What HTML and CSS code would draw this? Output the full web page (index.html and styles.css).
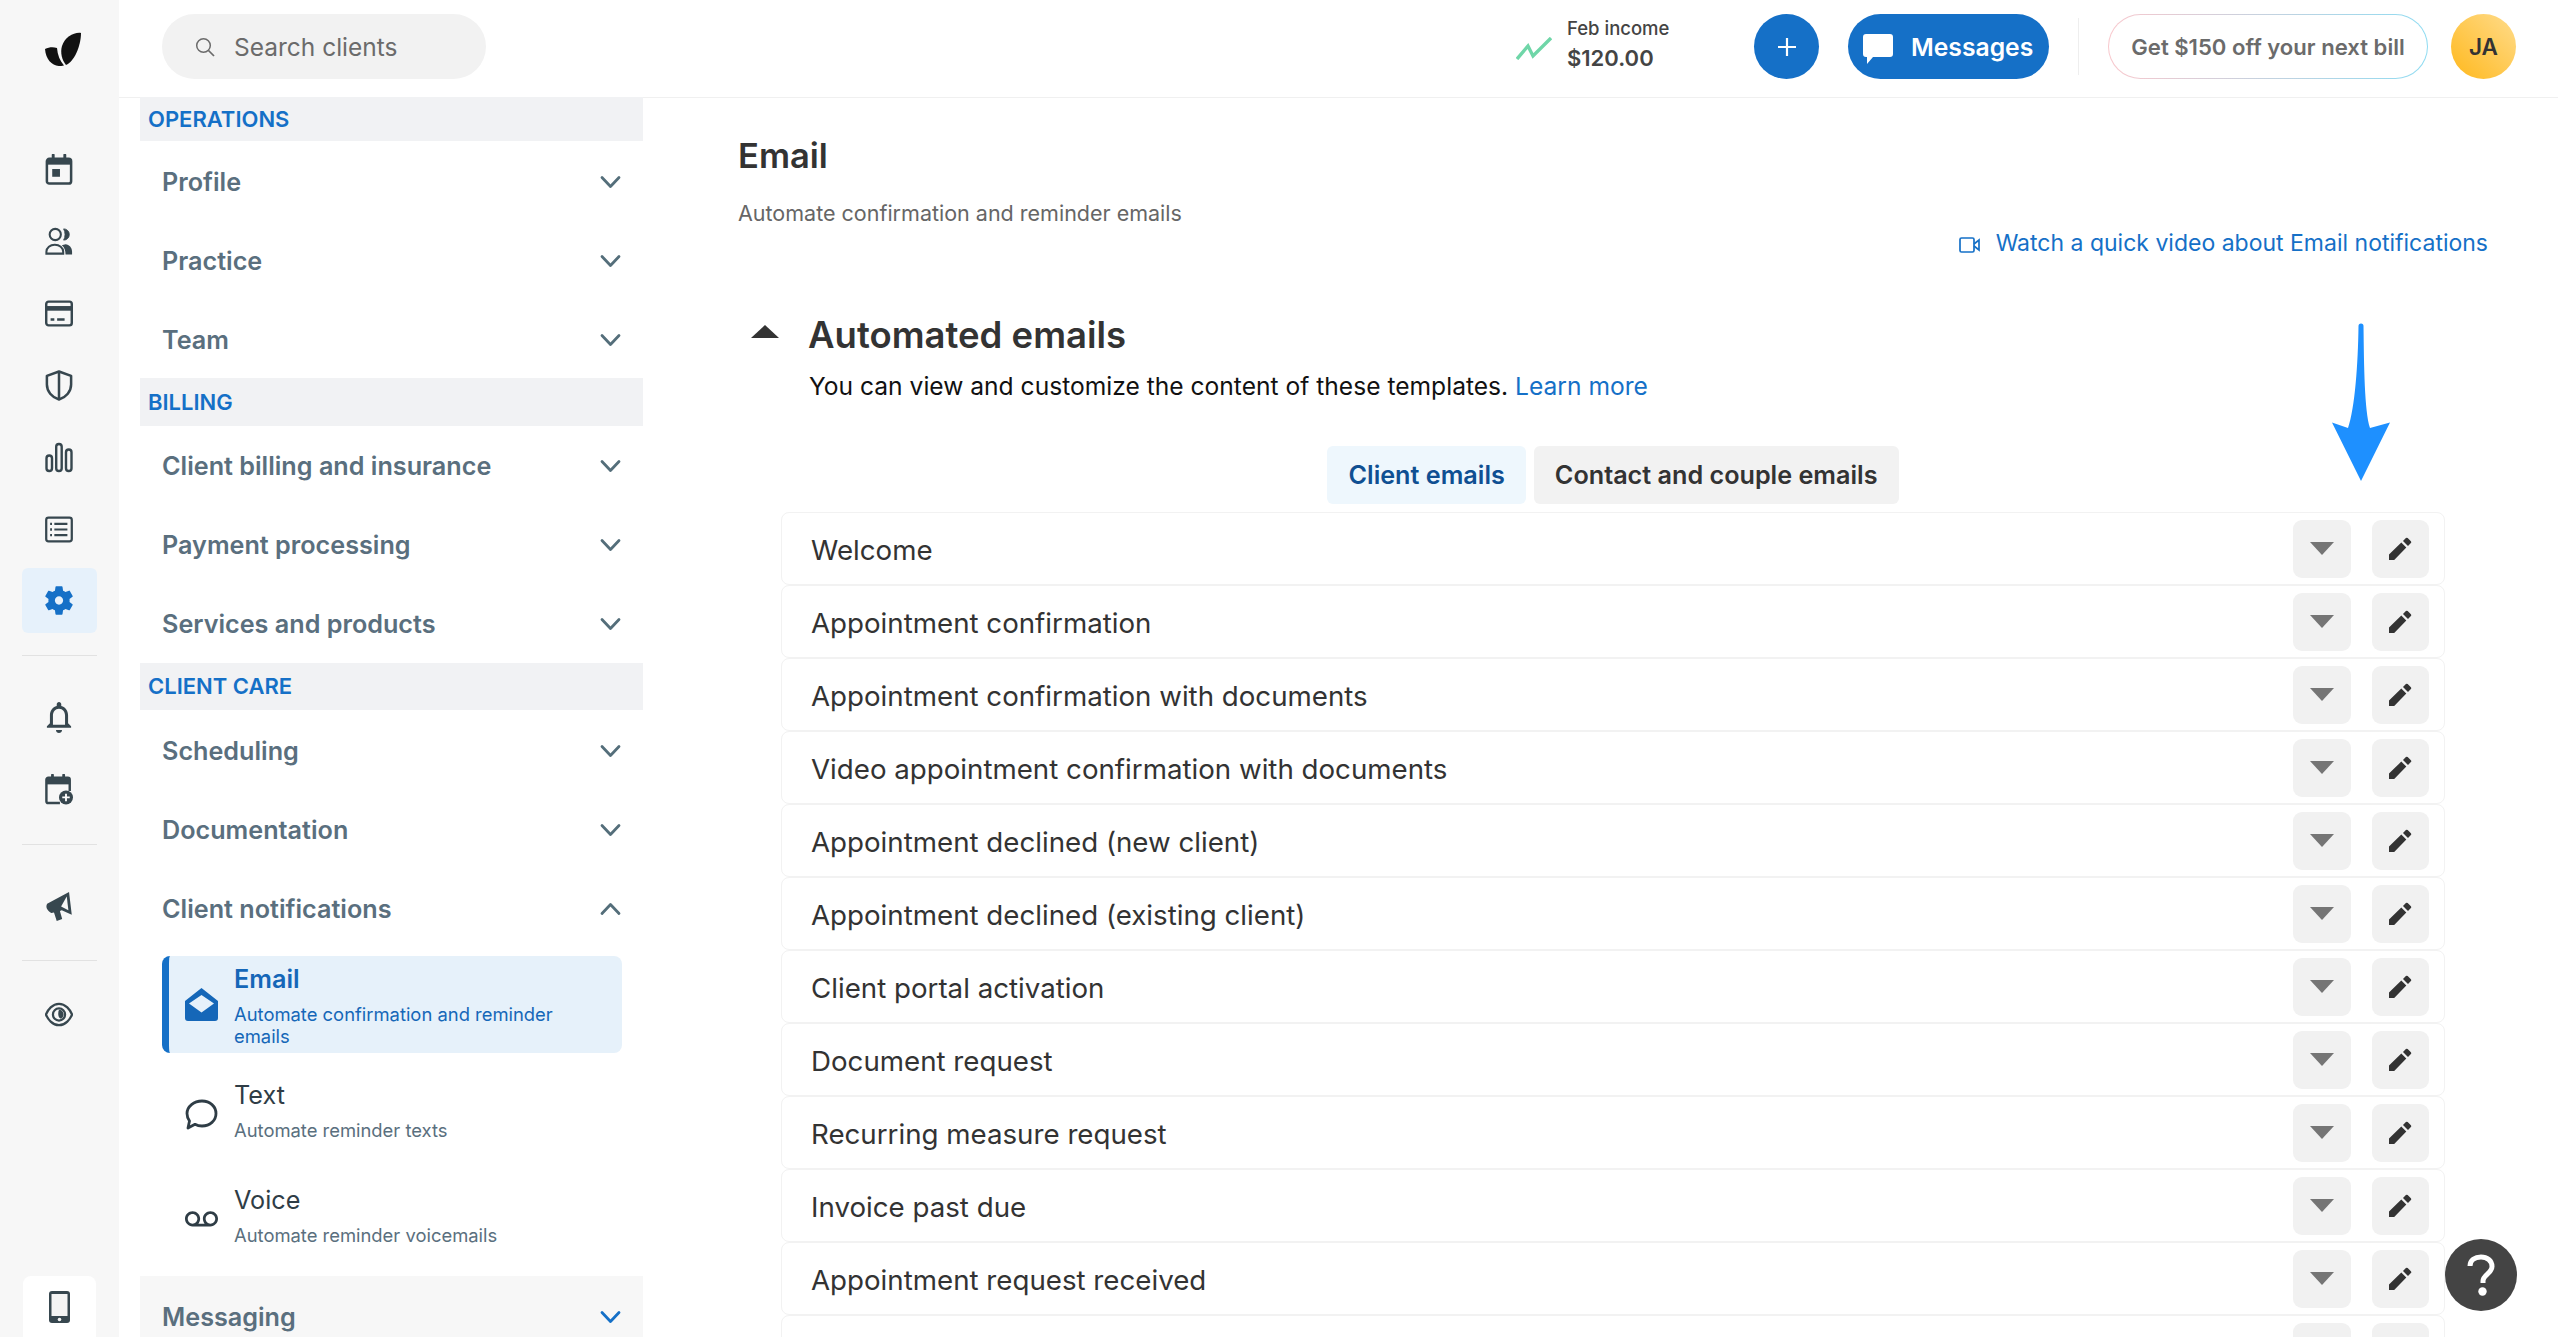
FILE: index.html
```html
<!DOCTYPE html>
<html lang="en">
<head>
<meta charset="utf-8">
<title>Email notifications</title>
<link rel="stylesheet" href="styles.css">
</head>
<body>
<svg class="defs" aria-hidden="true">
  <symbol id="chev" viewBox="0 0 21 14"><path d="M2 2.500l8.500 9 8.500-9" fill="none" stroke="currentColor" stroke-width="2.800" stroke-linecap="round" stroke-linejoin="round"/></symbol>
  <symbol id="pencil" viewBox="0 0 25 25"><path d="M1 18.600v5.400h5.200L18.300 11.600l-5-5zM15 5l2.900-2.900a1.300 1.300 0 0 1 1.800 0l3.200 3.200a1.300 1.300 0 0 1 0 1.800L20 10z" fill="#333"/></symbol>
</svg>
<div class="app">
  <nav class="rail">
    <div class="logo">
      <svg class="logo-svg" viewBox="0 0 36 34"><path d="M36 1C29 0 20 5 17 14 15 21 17 28 21 33 29 30 36 14 36 1Z" fill="#111"/><path d="M0 17c4-2 8-2.500 12-1 .5 7 3 13 7 17.500C10 36 1 30 0 17Z" fill="#111"/></svg>
    </div>
    <div class="rail-top">
      <a class="slot"><svg class="ri" viewBox="0 0 28 32"><path d="M8 1v4M20 1v4" stroke="#37474f" stroke-width="3" stroke-linecap="round"/><rect x="1.500" y="5" width="25" height="25.500" rx="2.500" fill="none" stroke="#37474f" stroke-width="2.600"/><rect x="2" y="5" width="24" height="6" fill="#37474f"/><rect x="7" y="15.500" width="8" height="8" fill="#37474f"/></svg></a>
      <a class="slot"><svg class="ri" viewBox="0 0 30 30"><circle cx="11" cy="7.500" r="6" fill="none" stroke="#37474f" stroke-width="2.200"/><path d="M20 1.500a6 6 0 0 1 0 12c2-3 2-9 0-12z" fill="#37474f" stroke="#37474f"/><path d="M1.500 28v-2c0-4.500 4-7.500 9-7.500s9 3 9 7.500v2z" fill="none" stroke="#37474f" stroke-width="2.200"/><path d="M22 18c4 .5 7 3.500 7 8v3h-7c0-4-1-8-4-10z" fill="#37474f"/></svg></a>
      <a class="slot"><svg class="ri" viewBox="0 0 30 30"><rect x="1.300" y="2.300" width="27.400" height="25.400" rx="2.500" fill="none" stroke="#37474f" stroke-width="2.600"/><rect x="2" y="7" width="26" height="5" fill="#37474f"/><path d="M6 21.500h4M13 21.500h8" stroke="#37474f" stroke-width="2.800"/></svg></a>
      <a class="slot"><svg class="ri" viewBox="0 0 28 32"><path d="M14 1.500L26.500 6v9c0 7-5 13-12.500 15.500C6.500 28 1.500 22 1.500 15V6z" fill="none" stroke="#37474f" stroke-width="2.600" stroke-linejoin="round"/><path d="M14 2v28" stroke="#37474f" stroke-width="2.600"/></svg></a>
      <a class="slot"><svg class="ri" viewBox="0 0 28 30"><rect x="1.500" y="13" width="5.500" height="15.500" rx="2.700" fill="none" stroke="#37474f" stroke-width="2.400"/><rect x="11.200" y="1.500" width="5.500" height="27" rx="2.700" fill="none" stroke="#37474f" stroke-width="2.400"/><rect x="21" y="7" width="5.500" height="21.500" rx="2.700" fill="none" stroke="#37474f" stroke-width="2.400"/></svg></a>
      <a class="slot"><svg class="ri" viewBox="0 0 30 30"><rect x="1.300" y="2.300" width="27.400" height="25.400" rx="2.500" fill="none" stroke="#37474f" stroke-width="2.400"/><path d="M10 9h14M10 15h14M10 21h14" stroke="#37474f" stroke-width="2.400"/><path d="M5.500 9h2M5.500 15h2M5.500 21h2" stroke="#37474f" stroke-width="2.600"/></svg></a>
    </div>
    <a class="gear"><svg class="ri" viewBox="2.500 1.500 19 21"><path d="M19.140 12.940c.04-.3.06-.61.06-.94 0-.32-.02-.64-.07-.94l2.030-1.580a.49.49 0 0 0 .12-.61l-1.920-3.320a.488.488 0 0 0-.59-.22l-2.390.96c-.5-.38-1.030-.7-1.620-.94l-.36-2.540a.484.484 0 0 0-.48-.41h-3.840c-.24 0-.43.17-.47.41l-.36 2.540c-.59.24-1.130.57-1.620.94l-2.390-.96c-.22-.08-.47 0-.59.22L2.740 8.870c-.12.21-.08.47.12.61l2.030 1.580c-.05.3-.09.63-.09.94s.02.64.07.94l-2.030 1.580a.49.49 0 0 0-.12.61l1.920 3.320c.12.22.37.29.59.22l2.390-.96c.5.38 1.030.7 1.620.94l.36 2.540c.05.24.24.41.48.41h3.840c.24 0 .44-.17.47-.41l.36-2.540c.59-.24 1.130-.56 1.620-.94l2.390.96c.22.08.47 0 .59-.22l1.920-3.320c.12-.22.07-.47-.12-.61l-2.010-1.580zM12 14.800c-1.500 0-2.800-1.300-2.800-2.800s1.300-2.800 2.800-2.800 2.800 1.300 2.800 2.800-1.300 2.800-2.800 2.800z" fill="#1570c7"/></svg></a>
    <hr class="rail-div d1">
    <a class="slot s-bell"><svg class="ri" viewBox="3.500 2 17 20.500"><path d="M12 22.500c1.100 0 2-.9 2-2h-4c0 1.100.9 2 2 2zm6-6.500v-5c0-3.070-1.630-5.640-4.500-6.320V3.500c0-.83-.67-1.500-1.500-1.500s-1.500.67-1.500 1.500v1.180C7.640 5.360 6 7.920 6 11v5l-2 2v1h16v-1l-2-2zm-2 1H8v-6c0-2.480 1.510-4.500 4-4.500s4 2.020 4 4.500v6z" fill="#37474f"/></svg></a>
    <a class="slot"><svg class="ri" viewBox="0 0 30 33"><path d="M8 1v4M20 1v4" stroke="#37474f" stroke-width="3" stroke-linecap="round"/><path d="M16 31H3.500a2 2 0 0 1-2-2V6a2 2 0 0 1 2-2h21a2 2 0 0 1 2 2v12" fill="none" stroke="#37474f" stroke-width="2.600"/><rect x="2" y="4" width="24" height="7" fill="#37474f"/><circle cx="22.500" cy="25" r="7.500" fill="#37474f"/><path d="M22.500 21v8M18.500 25h8" stroke="#fff" stroke-width="2"/></svg></a>
    <hr class="rail-div d2">
    <a class="slot s-mega"><svg class="ri" viewBox="0 0 30 34"><path d="M2 14l24-13 3 25-11-5-2 .8 2.500 9-6 2-3-9.300-3 .7C2 21 0 18 2 14z" fill="#37474f"/><path d="M23.500 6l1.800 15-8-4z" fill="#f7f7f7"/></svg></a>
    <hr class="rail-div d3">
    <a class="slot s-eye"><svg class="ri" viewBox="0 0 30 26"><path d="M15 1.500C22 1.500 27 8 29 13c-2 5-7 11.500-14 11.500S3 18 1 13C3 8 8 1.500 15 1.500z" fill="none" stroke="#37474f" stroke-width="2.400"/><circle cx="15" cy="13" r="6.500" fill="none" stroke="#37474f" stroke-width="2.400"/><path d="M15 8a5 5 0 0 1 2 9.500c-3-1-3.500-6-2-9.500z" fill="#37474f"/></svg></a>
    <a class="phone"><svg class="phone-svg" viewBox="0 0 21 32"><rect width="21" height="32" rx="3" fill="#37474f"/><rect x="2.500" y="3" width="16" height="22" fill="#f4f4f4"/><circle cx="10.500" cy="28.500" r="1.800" fill="#f4f4f4"/></svg></a>
  </nav>
  <div class="column">
    <header class="topbar">
      <div class="search">
        <svg class="search-ico" viewBox="0 0 20 20"><circle cx="8.500" cy="8.500" r="6.800" fill="none" stroke="#6b6b6b" stroke-width="1.500"/><path d="M13.500 13.500l5.500 5.500" stroke="#6b6b6b" stroke-width="1.700"/></svg>
        <span>Search clients</span>
      </div>
      <div class="top-right">
        <svg class="trend" viewBox="0 0 36 23"><path d="M1 22L12 9l5 10L35 1" fill="none" stroke="#6fd6a8" stroke-width="3.400"/></svg>
        <div class="income"><div class="inc-l">Feb income</div><div class="inc-v">$120.00</div></div>
        <button class="plus"><svg class="plus-svg" viewBox="0 0 20 20"><path d="M10 1v18M1 10h18" stroke="#fff" stroke-width="2.200"/></svg></button>
        <button class="msgs"><svg class="msg-svg" viewBox="0 0 30 30"><path d="M3 0h24a3 3 0 0 1 3 3v17a3 3 0 0 1-3 3H10l-6 7v-7H3a3 3 0 0 1-3-3V3a3 3 0 0 1 3-3z" fill="#fff"/></svg>Messages</button>
        <span class="vdiv"></span>
        <button class="promo">Get $150 off your next bill</button>
        <span class="avatar">JA</span>
      </div>
    </header>
    <div class="body">
      <aside class="sidebar">
        <div class="sec sec-first">OPERATIONS</div>
        <div class="item">Profile<svg class="chev"><use href="#chev"/></svg></div>
        <div class="item">Practice<svg class="chev"><use href="#chev"/></svg></div>
        <div class="item">Team<svg class="chev"><use href="#chev"/></svg></div>
        <div class="sec">BILLING</div>
        <div class="item">Client billing and insurance<svg class="chev"><use href="#chev"/></svg></div>
        <div class="item">Payment processing<svg class="chev"><use href="#chev"/></svg></div>
        <div class="item">Services and products<svg class="chev"><use href="#chev"/></svg></div>
        <div class="sec">CLIENT CARE</div>
        <div class="item">Scheduling<svg class="chev"><use href="#chev"/></svg></div>
        <div class="item">Documentation<svg class="chev"><use href="#chev"/></svg></div>
        <div class="item">Client notifications<svg class="chev chev-up"><use href="#chev"/></svg></div>
        <div class="subs">
          <div class="sub active">
            <svg class="sub-ico" viewBox="0 0 33 33"><path fill-rule="evenodd" d="M16.500 0L33 13v17a3 3 0 0 1-3 3H3a3 3 0 0 1-3-3V13zM16.500 7L4 15.500l12.500 9 12.500-9z" fill="#1567b8"/></svg>
            <div class="sub-text"><div class="sub-t">Email</div><div class="sub-d">Automate confirmation and reminder emails</div></div>
          </div>
          <div class="sub">
            <svg class="sub-ico" viewBox="0 0 33 33"><path d="M17 3c8 0 14 5.500 14 12.500S25 28 17 28c-2.500 0-5-.6-7-1.700L3 30l1.500-7C3 20.800 2 18.300 2 15.500 2 8.500 9 3 17 3z" fill="none" stroke="#2f3d46" stroke-width="2.800" stroke-linejoin="round"/></svg>
            <div class="sub-text"><div class="sub-t">Text</div><div class="sub-d">Automate reminder texts</div></div>
          </div>
          <div class="sub">
            <svg class="sub-ico" viewBox="0 0 24 24"><path d="M18.500 6C15.460 6 13 8.460 13 11.500c0 1.330.47 2.550 1.260 3.500H9.740c.79-.95 1.260-2.170 1.260-3.500C11 8.460 8.540 6 5.500 6S0 8.460 0 11.500 2.460 17 5.500 17h13c3.040 0 5.500-2.460 5.500-5.500S21.540 6 18.500 6zm-13 9C3.570 15 2 13.430 2 11.500S3.570 8 5.500 8 9 9.570 9 11.500 7.430 15 5.500 15zm13 0c-1.930 0-3.500-1.570-3.500-3.500S16.570 8 18.500 8 22 9.570 22 11.500 20.430 15 18.500 15z" fill="#2f3d46"/></svg>
            <div class="sub-text"><div class="sub-t">Voice</div><div class="sub-d">Automate reminder voicemails</div></div>
          </div>
        </div>
        <div class="item item-alt">Messaging<svg class="chev chev-blue"><use href="#chev"/></svg></div>
      </aside>
      <main class="main">
        <h1 class="title">Email</h1>
        <p class="subtitle">Automate confirmation and reminder emails</p>
        <div class="video">
          <a class="video-link"><svg class="video-ico" viewBox="0 0 22 16"><rect x="1" y="1" width="14" height="14" rx="1.500" fill="none" stroke="#1570c7" stroke-width="1.700"/><path d="M15 7l5-4v10l-5-4" fill="none" stroke="#1570c7" stroke-width="1.700"/></svg>Watch a quick video about Email notifications</a>
        </div>
        <div class="sect-head">
          <span class="tri-up"></span>
          <h2 class="h2">Automated emails</h2>
        </div>
        <p class="lead">You can view and customize the content of these templates. <a class="learn">Learn more</a></p>
        <div class="panel">
          <div class="tabs">
            <button class="tab tab-on">Client emails</button>
            <button class="tab">Contact and couple emails</button>
          </div>
          <div class="rows">
            <div class="row"><span class="lbl">Welcome</span><button class="rbtn rb-a"><span class="tri"></span></button><button class="rbtn rb-b"><svg class="pen"><use href="#pencil"/></svg></button></div>
            <div class="row"><span class="lbl">Appointment confirmation</span><button class="rbtn rb-a"><span class="tri"></span></button><button class="rbtn rb-b"><svg class="pen"><use href="#pencil"/></svg></button></div>
            <div class="row"><span class="lbl">Appointment confirmation with documents</span><button class="rbtn rb-a"><span class="tri"></span></button><button class="rbtn rb-b"><svg class="pen"><use href="#pencil"/></svg></button></div>
            <div class="row"><span class="lbl">Video appointment confirmation with documents</span><button class="rbtn rb-a"><span class="tri"></span></button><button class="rbtn rb-b"><svg class="pen"><use href="#pencil"/></svg></button></div>
            <div class="row"><span class="lbl">Appointment declined (new client)</span><button class="rbtn rb-a"><span class="tri"></span></button><button class="rbtn rb-b"><svg class="pen"><use href="#pencil"/></svg></button></div>
            <div class="row"><span class="lbl">Appointment declined (existing client)</span><button class="rbtn rb-a"><span class="tri"></span></button><button class="rbtn rb-b"><svg class="pen"><use href="#pencil"/></svg></button></div>
            <div class="row"><span class="lbl">Client portal activation</span><button class="rbtn rb-a"><span class="tri"></span></button><button class="rbtn rb-b"><svg class="pen"><use href="#pencil"/></svg></button></div>
            <div class="row"><span class="lbl">Document request</span><button class="rbtn rb-a"><span class="tri"></span></button><button class="rbtn rb-b"><svg class="pen"><use href="#pencil"/></svg></button></div>
            <div class="row"><span class="lbl">Recurring measure request</span><button class="rbtn rb-a"><span class="tri"></span></button><button class="rbtn rb-b"><svg class="pen"><use href="#pencil"/></svg></button></div>
            <div class="row"><span class="lbl">Invoice past due</span><button class="rbtn rb-a"><span class="tri"></span></button><button class="rbtn rb-b"><svg class="pen"><use href="#pencil"/></svg></button></div>
            <div class="row"><span class="lbl">Appointment request received</span><button class="rbtn rb-a"><span class="tri"></span></button><button class="rbtn rb-b"><svg class="pen"><use href="#pencil"/></svg></button></div>
            <div class="row"><span class="lbl"></span><button class="rbtn rb-a"><span class="tri"></span></button><button class="rbtn rb-b"><svg class="pen"><use href="#pencil"/></svg></button></div>
          </div>
        </div>
      </main>
    </div>
  </div>
</div>
<svg class="arrow" viewBox="0 0 58 158"><path d="M26.500 3a2.500 2.500 0 0 1 5 0c.5 40 1 85 6.500 102l20-5.500L29 158 0 99.500l16 5.500C23 85 26 40 26.500 3z" fill="#1e90ff"/></svg>
<button class="help"><svg class="help-svg" viewBox="0 0 28 42"><path d="M3 12C3 6 8 3 14 3s11 3.500 11 9.500c0 7-9 8-9 14.500v2" fill="none" stroke="#fff" stroke-width="5"/><circle cx="15.500" cy="37.500" r="4.200" fill="#fff"/></svg></button>
</body>
</html>
```
FILE: styles.css
```css
* { box-sizing: border-box; }
html, body { margin: 0; height: 100%; }
body { font-family: Inter, "Noto Sans", sans-serif; background: #fff; overflow: hidden; color: #333; }
button { font: inherit; border: 0; padding: 0; }
.defs { position: absolute; width: 0; height: 0; }
.app { display: flex; height: 1337px; overflow: hidden; }

/* rail */
.rail { width: 119px; flex: none; background: #f7f7f7; display: flex; flex-direction: column; align-items: center; padding-right: 1px; }
.logo { height: 98px; padding-top: 32px; width: 100%; display: flex; justify-content: center; }
.logo-svg { width: 36px; height: 34px; margin-left: 8px; }
.rail-top { padding-top: 35px; display: flex; flex-direction: column; }
.slot { height: 72px; width: 73px; display: flex; align-items: center; justify-content: center; flex: none; }
.ri { width: 28px; height: 31px; }
.gear { margin-top: 3px; width: 75px; height: 65px; background: #e6f1fb; border-radius: 6px; display: flex; align-items: center; justify-content: center; flex: none; }
.rail-div { width: 75px; height: 1px; border: 0; margin: 0; background: #e2e2e2; flex: none; }
.d1 { margin-top: 22px; }
.s-bell { margin-top: 25px; }
.d2 { margin-top: 19px; }
.s-mega { margin-top: 25px; }
.d3 { margin-top: 18px; }
.s-eye { margin-top: 17px; }
.phone { margin-top: auto; width: 73px; height: 61px; background: #fff; border-radius: 8px 8px 0 0; display: flex; align-items: center; justify-content: center; flex: none; }
.phone-svg { width: 21px; height: 32px; }

/* topbar */
.column { flex: 1; min-width: 0; display: flex; flex-direction: column; }
.topbar { height: 98px; flex: none; border-bottom: 1px solid #f0f0f0; display: flex; align-items: flex-start; padding: 14px 42px 0 43px; }
.search { width: 324px; height: 65px; background: #f2f2f2; border-radius: 33px; display: flex; align-items: center; padding-left: 33px; font-size: 24.500px; color: #6b6b6b; }
.search-ico { width: 20px; height: 20px; margin-right: 19px; }
.top-right { margin-left: auto; display: flex; align-items: center; height: 65px; }
.trend { width: 36px; height: 23px; margin-right: 15px; margin-top: 3px; }
.income { width: 187px; margin-bottom: 4px; }
.inc-l { font-size: 18.500px; font-weight: 500; color: #444; line-height: 24px; }
.inc-v { font-size: 22px; font-weight: 600; color: #444; line-height: 30px; margin-top: 3px; }
.plus { width: 65px; height: 65px; border-radius: 50%; background: #1570c7; display: flex; align-items: center; justify-content: center; }
.plus-svg { width: 20px; height: 20px; }
.msgs { margin-left: 29px; width: 201px; height: 65px; border-radius: 33px; background: #1570c7; color: #fff; font-size: 24.700px; font-weight: 600; display: flex; align-items: center; padding-left: 15px; }
.msg-svg { width: 30px; height: 30px; margin-right: 18px; margin-top: 4px; }
.vdiv { width: 1px; height: 57px; background: #eee; margin: 0 29px; }
.promo { width: 320px; height: 65px; border-radius: 33px; border: 1.500px solid transparent; background: linear-gradient(#fff, #fff) padding-box, linear-gradient(90deg, #f9c8cd, #8fdcf2) border-box; color: #6b6b6b; font-size: 22.100px; font-weight: 600; }
.avatar { margin-left: 23px; width: 65px; height: 65px; border-radius: 50%; background: linear-gradient(45deg, #ffb81c, #ffdc8c); display: flex; align-items: center; justify-content: center; font-size: 22.500px; font-weight: 600; color: #333; }

/* sidebar */
.body { flex: 1; display: flex; min-height: 0; margin-top: -1px; }
.sidebar { width: 503px; margin-left: 21px; flex: none; }
.sec { height: 47.500px; background: #f1f2f4; color: #1570c7; font-size: 22px; font-weight: 600; display: flex; align-items: center; padding: 0 8px; }
.sec-first { height: 44px; }
.item { height: 79px; display: flex; align-items: center; justify-content: space-between; padding: 2px 22px 0; font-size: 25.200px; font-weight: 600; color: #5a6f7e; }
.item-alt { background: #f7f7f7; margin-top: 5px; }
.chev { width: 21px; height: 14px; color: #546e7a; }
.chev-up { transform: scaleY(-1); }
.chev-blue { color: #1570c7; }
.subs { padding: 9px 21px 0 22px; }
.sub { height: 105px; display: flex; padding: 19px 0 0 23px; color: #2f3d46; }
.sub.active { height: 97px; margin-bottom: 8px; padding-top: 8px; padding-left: 16px; border-left: 7px solid #1570c7; border-radius: 8px; background: #e6f1fa; color: #1567b8; }
.sub-ico { width: 33px; height: 33px; flex: none; margin: 18px 16px 0 0; }
.sub-text { max-width: 340px; }
.sub-t { font-size: 25.200px; line-height: 30px; }
.active .sub-t { font-weight: 600; }
.sub-d { font-size: 18.400px; line-height: 22px; margin-top: 9px; color: #5a6f7e; }
.active .sub-d { color: #1567b8; margin-top: 9px; }
.active .sub-ico { margin-top: 24px; }

/* main */
.main { flex: 1; min-width: 0; padding: 37px 70px 0 96px; }
.title { margin: 0 0 0 -1px; font-size: 34.500px; line-height: 44px; font-weight: 600; color: #333; }
.subtitle { margin: 20px 0 0 -1px; font-size: 21.500px; line-height: 30px; color: #666; }
.video { display: flex; justify-content: flex-end; height: 30px; }
.video-link { display: flex; align-items: center; font-size: 23px; line-height: 30px; color: #1570c7; }
.video-ico { width: 22px; height: 16px; margin-right: 15px; margin-top: 3px; }
.sect-head { display: flex; align-items: center; margin-top: 53px; height: 48px; }
.tri-up { width: 0; height: 0; border-left: 14.500px solid transparent; border-right: 14.500px solid transparent; border-bottom: 13px solid #333; margin: 0 29px 0 12px; transform: translateY(-4px); }
.h2 { margin: 0; font-size: 36.500px; line-height: 48px; font-weight: 600; color: #333; }
.lead { margin: 11px 0 0 70px; font-size: 24.600px; line-height: 32px; color: #111; }
.learn { color: #1570c7; }
.panel { margin: 44px 0 0 42px; width: 1664px; }
.tabs { display: flex; justify-content: center; gap: 8px; }
.tab { height: 58px; padding: 0 21px; border-radius: 6px; background: #f2f2f2; color: #333; font-size: 25.200px; font-weight: 600; }
.tab-on { background: #eef7fd; color: #0f4f92; }
.rows { margin-top: 8px; }
.row { height: 73px; border: 1.500px solid #f2f2f2; border-radius: 8px; display: flex; align-items: center; padding: 0 15px 0 29px; }
.lbl { flex: 1; font-size: 27.700px; color: #333; padding-top: 2px; }
.rbtn { height: 58px; background: #f1f1f1; border-radius: 9px; display: flex; align-items: center; justify-content: center; flex: none; }
.rb-a { width: 58px; }
.rb-b { width: 57px; margin-left: 21px; }
.tri { width: 0; height: 0; border-left: 12.500px solid transparent; border-right: 12.500px solid transparent; border-top: 13px solid #757575; }
.pen { width: 25px; height: 25px; }

/* overlays */
.arrow { position: absolute; left: 2332px; top: 323px; width: 58px; height: 158px; }
.help { position: absolute; left: 2445px; top: 1239px; width: 72px; height: 72px; border-radius: 50%; background: #444; display: flex; align-items: center; justify-content: center; }
.help-svg { width: 28px; height: 42px; }
```
